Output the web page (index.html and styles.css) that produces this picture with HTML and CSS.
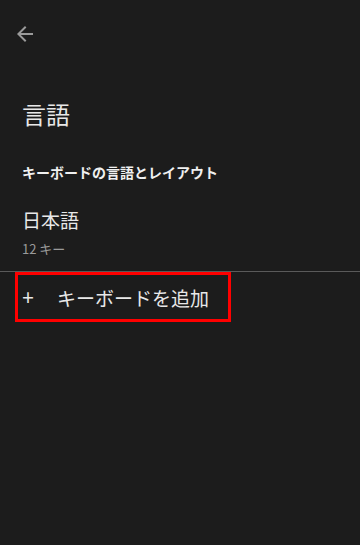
FILE: index.html
```html
<!DOCTYPE html>
<html lang="ja">
<head>
    <meta charset="UTF-8">
    <meta name="viewport" content="width=device-width, initial-scale=1.0">
    <title>言語</title>
    <link rel="stylesheet" href="styles.css">
</head>
<body>
    <div class="page">
        <div class="topbar">
            <svg class="back" width="24" height="24" viewBox="0 0 24 24">
                <path d="M20 11H7.83l5.59-5.59L12 4l-8 8 8 8 1.41-1.41L7.83 13H20v-2z" fill="#9a9a9a"/>
            </svg>
        </div>
        <h1 class="title">言語</h1>
        <h4 class="section">キーボードの言語とレイアウト</h4>
        <div class="item">
            <div class="item-name">日本語</div>
            <div class="item-sub">12 キー</div>
        </div>
        <hr class="divider">
        <div class="addrow">
            <span class="plus">+</span>
            <span class="addtext">キーボードを追加</span>
        </div>
    </div>
</body>
</html>
```

FILE: styles.css
```css
* {
    box-sizing: border-box;
}
html, body {
    height: 100%;
}
body {
    margin: 0;
    background: #1c1c1c;
    color: #e6e6e6;
    font-family: "Noto Sans CJK JP", "Noto Sans", Roboto, sans-serif;
}
.topbar {
    height: 60px;
    padding: 22px 0 0 13px;
}
.back {
    display: block;
}
.title {
    margin: 38px 0 0 0;
    padding-left: 22px;
    font-size: 24px;
    line-height: 32px;
    font-weight: 400;
    color: #e8e8e8;
}
.section {
    margin: 32px 0 0 0;
    padding-left: 22px;
    font-size: 14px;
    line-height: 20px;
    font-weight: 700;
    color: #f0f0f0;
}
.item {
    margin-top: 24px;
    padding: 0 0 13px 22px;
}
.item-name {
    font-size: 19px;
    line-height: 28px;
    color: #e8e8e8;
}
.item-sub {
    margin-top: 6px;
    font-size: 13px;
    line-height: 18px;
    color: #9a9a9a;
}
.divider {
    margin: 0;
    border: 0;
    height: 1px;
    background: #5a5a5a;
}
.addrow {
    display: flex;
    align-items: center;
    width: 216px;
    height: 50px;
    margin-left: 15px;
    border: 3px solid #ff0000;
    padding-left: 4px;
}
.plus {
    width: 35px;
    font-family: "Noto Sans", sans-serif;
    font-size: 21px;
    color: #e8e8e8;
}
.addtext {
    font-size: 19px;
    color: #e8e8e8;
}
```
